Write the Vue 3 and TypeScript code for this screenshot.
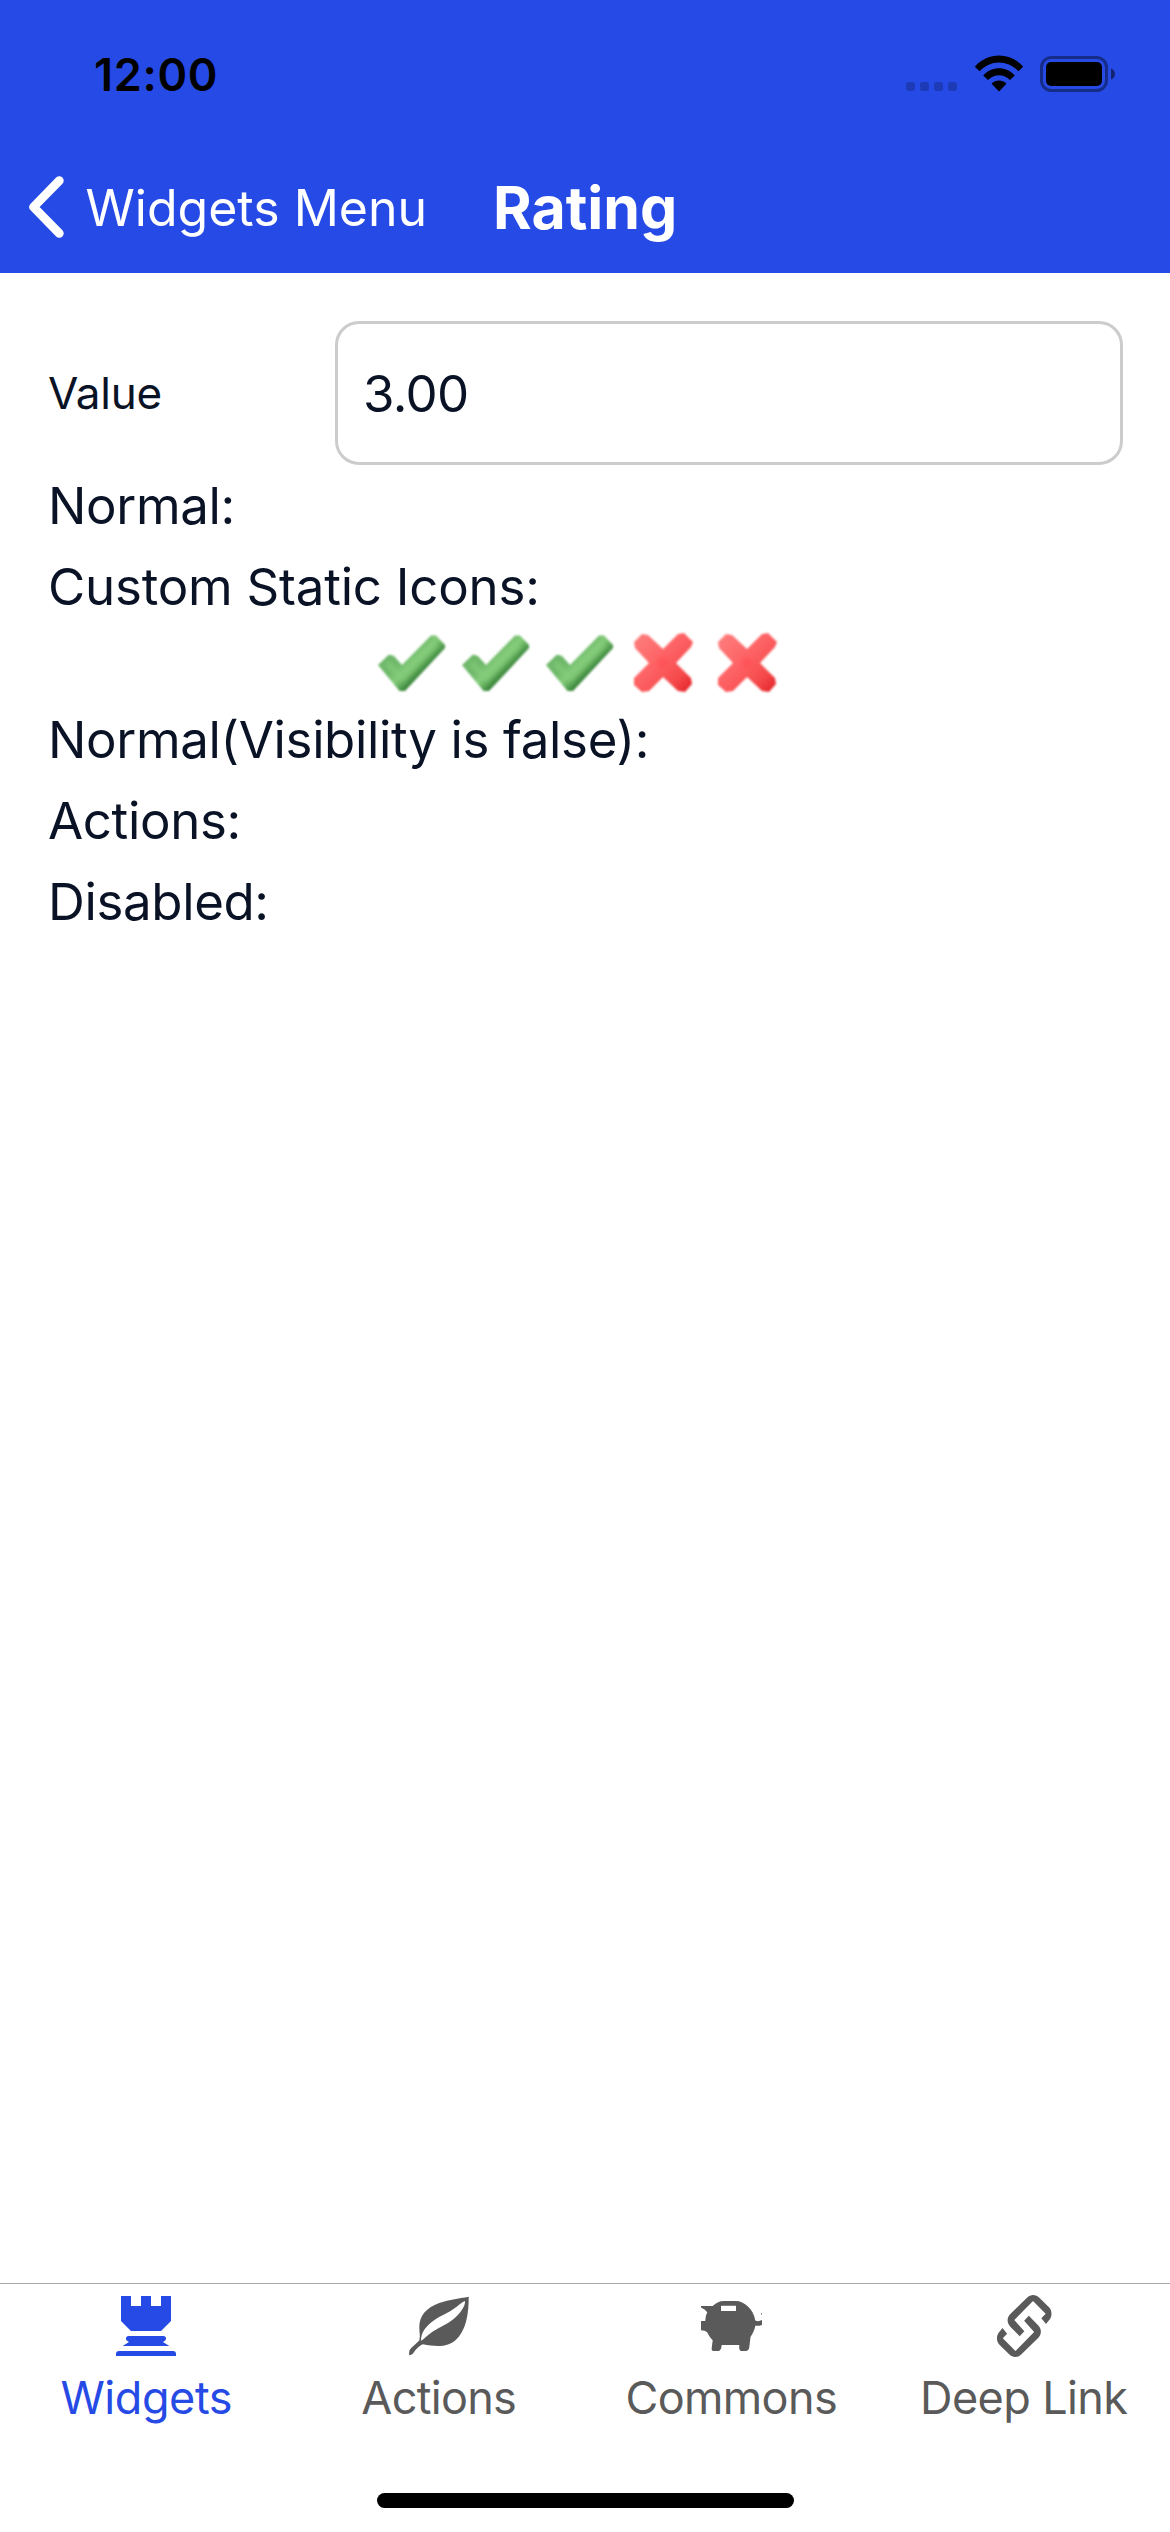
<script setup lang="ts">
interface Tab {
  id: string
  label: string
  spacing: string
}

const tabs: Tab[] = [
  { id: 'widgets', label: 'Widgets', spacing: '-0.42px' },
  { id: 'actions', label: 'Actions', spacing: '-0.7px' },
  { id: 'commons', label: 'Commons', spacing: '-0.64px' },
  { id: 'link', label: 'Deep Link', spacing: '-0.59px' },
]
const activeTab = 'widgets'

const value = 3
const marks: boolean[] = Array.from({ length: 5 }, (_, i) => i < value)

// One half of the chain link; the other half is the same shape turned by 180 degrees.
const linkHalf =
  'M423 145L436 131L398 93L342 150L372 184L358 199L330 170C319 158 319 144 330 132L380 83C391 72 406 72 417 83L446 112C456 122 456 140 446 151L437 162Z'
</script>

<template>
  <div class="screen">
    <header class="header">
      <div class="status">
        <span class="time">12:00</span>
        <div class="status-icons">
          <span class="cell"><i v-for="n in 4" :key="n"></i></span>
          <svg class="wifi" width="50" height="37" viewBox="0 0 50 37">
            <path d="M0.8 11.7C14-3.3 36-3.3 49.2 11.7L44.4 16.3C33.5 4.7 16.5 4.7 5.6 16.3Z" />
            <path d="M9.2 20.4C18 10.7 32 10.7 40.8 20.4L36 25.1C29.8 18.6 20.2 18.6 14 25.1Z" />
            <path d="M17.6 28.7C22 24.3 28 24.3 32.4 28.7L25 36.4Z" />
          </svg>
          <svg class="battery" width="76" height="36" viewBox="0 0 76 36">
            <rect x="1.5" y="1.5" width="65" height="33" rx="10" fill="none" stroke="#000" stroke-opacity="0.4" stroke-width="3" />
            <rect x="6" y="6" width="56" height="24" rx="5" />
            <path d="M71 12.5C76.3 14 76.3 22 71 23.5Z" fill-opacity="0.5" />
          </svg>
        </div>
      </div>
      <nav class="nav">
        <svg class="back" width="36" height="62" viewBox="0 0 36 62">
          <path d="M31.3 4.7L5.5 31L31.3 57.3" fill="none" stroke="#fff" stroke-width="8.8" stroke-linecap="round" stroke-linejoin="round" />
        </svg>
        <span class="back-label">Widgets Menu</span>
        <h1 class="title">Rating</h1>
      </nav>
    </header>

    <main class="content">
      <div class="field">
        <span class="field-label">Value</span>
        <div class="input">{{ value.toFixed(2) }}</div>
      </div>
      <p class="line">Normal:</p>
      <p class="line custom">Custom Static Icons:</p>
      <div class="rating">
        <svg v-for="(on, i) in marks" :key="i" class="mark" width="72" height="72" viewBox="0 0 72 72">
          <template v-if="on">
            <defs>
              <linearGradient :id="`tick-${i}`" gradientUnits="userSpaceOnUse" x1="33" y1="27" x2="49" y2="43">
                <stop offset="0" stop-color="#6fb86a" />
                <stop offset="0.45" stop-color="#84cc7a" />
                <stop offset="0.7" stop-color="#67b160" />
                <stop offset="1" stop-color="#3c873d" />
              </linearGradient>
            </defs>
            <path class="soft" d="M3 38L14 27.5L19 29L27 38L56 8.500L61 8.500L70 18L70 21L30 64H24.500Z" :fill="`url(#tick-${i})`" />
            <path class="glow" d="M12 36L27 51L60 17" fill="none" stroke="#86ce7c" stroke-width="6" />
          </template>
          <template v-else>
            <defs>
              <linearGradient :id="`cross-${i}`" x1="0" y1="0" x2="1" y2="1">
                <stop offset="0" stop-color="#ff8080" />
                <stop offset="0.5" stop-color="#fd5f61" />
                <stop offset="0.75" stop-color="#f54a4c" />
                <stop offset="1" stop-color="#e11f25" />
              </linearGradient>
            </defs>
            <path
              class="soft"
              d="M7 15L15 7L21 8L36 22L51 7L57 6L66 15L64 20L49 36L64 51L65 57L58 65L51 64L36 50L22 64L15 65L7 58L7 51L22 36L8 21Z"
              :fill="`url(#cross-${i})`"
            />
            <rect class="glow" x="31" y="31" width="10" height="10" fill="#ff5054" />
          </template>
        </svg>
      </div>
      <p class="line">Normal(Visibility is false):</p>
      <p class="line">Actions:</p>
      <p class="line">Disabled:</p>
    </main>

    <footer class="tabs">
      <div class="tab-row">
        <div v-for="tab in tabs" :key="tab.id" class="tab" :class="{ active: tab.id === activeTab }">
          <svg v-if="tab.id === 'widgets'" class="icon" viewBox="0 0 60 60">
            <path d="M5 0H15V10H25V0H35V10H45V0H55V25L45 35H15L5 25Z" />
            <path d="M12.5 40H47.5C50 40 50.8 43 49.2 44.5L47 46L53.3 50H6.7L13 46L10.8 44.5C9.2 43 10 40 12.5 40Z" />
            <path d="M0 60V58Q0 55 3 55H57Q60 55 60 58V60Z" />
          </svg>
          <svg v-else-if="tab.id === 'actions'" class="icon" viewBox="0 0 60 60">
            <path
              fill-rule="evenodd"
              d="M59.7 0.7C50 2.5 38 4.3 31 6.7C17 11.5 10.3 20 10.3 31C10.3 36 11.5 40 10.3 44.5C7 48 2.5 51 0.6 54Q-0.2 57 0.3 59.3C2 59 3.5 58.3 4.7 56.5C7 53 10 50 13.7 48.3C20 49.3 25 50.2 31 50C49 49.5 60 33 59.7 0.7ZM56 5C53 6 50.5 8.5 47.7 10.7C39 17.5 30 20 22.7 26C16 31.5 12 37 12 44.7C15.5 43 19 38.5 24.3 35.2C31 31 38 28.5 44.3 23.3C50.5 18 56.5 10.5 56 5Z"
            />
          </svg>
          <svg v-else-if="tab.id === 'commons'" class="icon" viewBox="0 0 60 60">
            <path
              fill-rule="evenodd"
              d="M0 10H11.7C15 7 18 5 23 5H35C43 5 52.5 13 54.3 24.5C56.5 25.5 58.5 25.3 61 24V29C59 29.8 56.5 30 54.3 29.8C53.8 34 51.5 38 49.5 41L48.3 51Q48 55 44.5 55H40.5Q37.7 55 38.3 49H20.7Q20.2 55 17 55H12.5Q10.3 55 10.7 52L11.7 44.3C9 41.5 7.5 39 6.2 36.2Q4 34.5 0 34.3V25H4.2Q4.3 20 6.3 16.3Q4 13 0 11.5ZM20.5 9.7Q20 9.7 20 10.2V14.5Q20 15 20.5 15H34.5Q35 15 35 14.5V10.2Q35 9.7 34.5 9.7Z"
            />
            <path d="M61 16.5L60 17.7L61 19Z" />
          </svg>
          <svg v-else class="icon" viewBox="0 0 60 60">
            <g transform="translate(-93.67 -26) scale(0.33333)">
              <path :d="linkHalf" />
              <path :d="linkHalf" transform="rotate(180 371.7 168)" />
            </g>
          </svg>
          <span class="tab-label" :style="{ letterSpacing: tab.spacing }">{{ tab.label }}</span>
        </div>
      </div>
      <div class="home"></div>
    </footer>
  </div>
</template>

<style>
body {
  margin: 0;
  background: #fff;
}
</style>

<style scoped>
.screen {
  display: flex;
  flex-direction: column;
  width: 1170px;
  height: 2532px;
  background: #fff;
  color: #0a1326;
  font-family: Inter, "Liberation Sans", sans-serif;
  overflow: hidden;
}
.header {
  height: 273px;
  background: #264ae5;
}
.status {
  display: flex;
  justify-content: space-between;
  height: 141px;
  color: #000;
}
.time {
  margin: 47px 0 0 94px;
  font-size: 45px;
  font-weight: 600;
  line-height: 55px;
  letter-spacing: 0.68px;
}
.status-icons {
  display: flex;
  align-items: flex-start;
  padding-right: 54px;
}
.cell {
  display: flex;
  gap: 5px;
  margin: 82px 17px 0 0;
}
.cell i {
  width: 9px;
  height: 9px;
  border-radius: 2.5px;
  background: rgba(0, 0, 0, 0.2);
}
.wifi {
  margin: 55px 16px 0 0;
}
.battery {
  margin-top: 56px;
}
.nav {
  display: flex;
  align-items: center;
  height: 132px;
  padding-left: 28px;
  color: #fff;
}
.back {
  flex: none;
}
.back-label {
  width: 407.5px;
  margin-left: 21.5px;
  padding-top: 2px;
  font-size: 50px;
  line-height: 64px;
  white-space: nowrap;
}
.title {
  margin: 0;
  padding-top: 2px;
  font-size: 59px;
  font-weight: 700;
  line-height: 72px;
}
.content {
  flex: 1;
  padding: 48px 47px 0 48px;
}
.field {
  display: flex;
  align-items: center;
  height: 144px;
}
.field-label {
  width: 287px;
  font-size: 44px;
  letter-spacing: -0.25px;
}
.input {
  flex: 1;
  box-sizing: border-box;
  height: 144px;
  padding-left: 25px;
  border: 3px solid #ccc;
  border-radius: 24px;
  font-size: 51px;
  line-height: 139px;
  letter-spacing: -0.64px;
}
.line {
  margin: 0;
  height: 81px;
  font-size: 51px;
  line-height: 81px;
  letter-spacing: -0.36px;
}
.custom {
  letter-spacing: -0.22px;
}
.rating {
  display: flex;
  gap: 12px;
  height: 72px;
  padding-left: 327px;
}
.soft {
  filter: blur(1.3px);
}
.glow {
  opacity: 0.7;
  filter: blur(2px);
}
.tabs {
  display: flex;
  flex-direction: column;
  align-items: center;
  justify-content: space-between;
  box-sizing: border-box;
  height: 249px;
  padding: 12px 0 24px;
  border-top: 1px solid #a7a7a7;
}
.tab-row {
  display: flex;
  width: 100%;
}
.tab {
  display: flex;
  flex: 1;
  flex-direction: column;
  align-items: center;
  color: #5a5a5a;
}
.tab.active {
  color: #264ae5;
}
.icon {
  width: 60px;
  height: 60px;
  fill: currentColor;
  overflow: visible;
}
.tab-label {
  margin-top: 14px;
  font-size: 45px;
  line-height: 55px;
}
.home {
  width: 417px;
  height: 15px;
  border-radius: 8px;
  background: #000;
}
</style>
